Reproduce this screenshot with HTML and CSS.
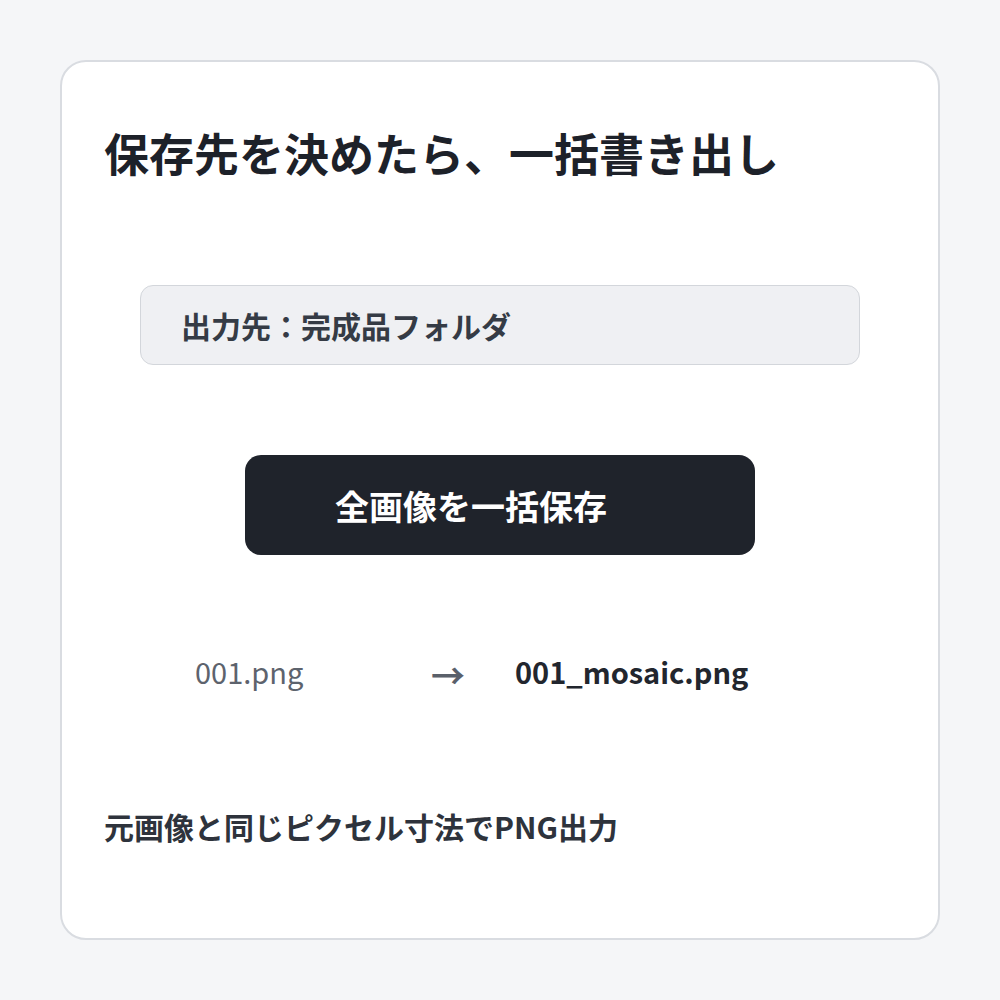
FILE: index.html
```html
<!DOCTYPE html>
<html lang="ja">
<head>
<meta charset="utf-8">
<title>一括書き出し</title>
<link rel="stylesheet" href="styles.css">
</head>
<body>
<main class="card">
  <h1 class="title">保存先を決めたら、一括書き出し</h1>
  <div class="dest">出力先：完成品フォルダ</div>
  <div class="action">
    <button class="save-btn" type="button">全画像を一括保存</button>
  </div>
  <div class="rename">
    <span class="src">001.png</span>
    <span class="arrow">→</span>
    <span class="dst">001_mosaic.png</span>
  </div>
  <p class="note">元画像と同じピクセル寸法でPNG出力</p>
</main>
</body>
</html>
```
FILE: styles.css
```css
* { box-sizing: border-box; }
html, body { margin: 0; padding: 0; }
body {
  background: #f5f6f8;
  font-family: "Noto Sans CJK JP", "Noto Sans", sans-serif;
  width: 1000px;
  height: 1000px;
  padding: 60px;
}
.card {
  width: 880px;
  height: 880px;
  background: #ffffff;
  border: 2px solid #d9dce1;
  border-radius: 26px;
  padding: 59px 42px 0 42px;
  display: flex;
  flex-direction: column;
}
.title {
  margin: 0;
  font-size: 45px;
  line-height: 63px;
  font-weight: 700;
  color: #1d2129;
}
.dest {
  margin: 101px 0 0 36px;
  width: 720px;
  height: 80px;
  background: #eff0f3;
  border: 1px solid #d3d6db;
  border-radius: 13px;
  padding-left: 40px;
  display: flex;
  align-items: center;
  font-size: 30px;
  font-weight: 700;
  color: #353b45;
}
.action {
  margin-top: 90px;
  display: flex;
  justify-content: center;
}
.save-btn {
  width: 510px;
  height: 100px;
  border: none;
  border-radius: 16px;
  background: #1f232b;
  color: #ffffff;
  font-family: inherit;
  font-size: 34px;
  font-weight: 700;
  text-align: left;
  padding: 0 0 0 90px;
}
.rename {
  margin: 95px 0 0 91px;
  display: grid;
  grid-template-columns: 235px 85px auto;
  align-items: center;
  height: 42px;
  font-size: 29px;
  line-height: 42px;
}
.src { color: #5d636d; font-weight: 400; }
.arrow {
  color: #5a606a;
  font-size: 34px;
  font-weight: 700;
  line-height: 34px;
  padding-top: 8px;
  padding-left: 1px;
}
.dst { color: #22262e; font-weight: 700; }
.note {
  margin: 113px 0 0 0;
  font-size: 30px;
  line-height: 42px;
  font-weight: 700;
  color: #2e333c;
}
```
